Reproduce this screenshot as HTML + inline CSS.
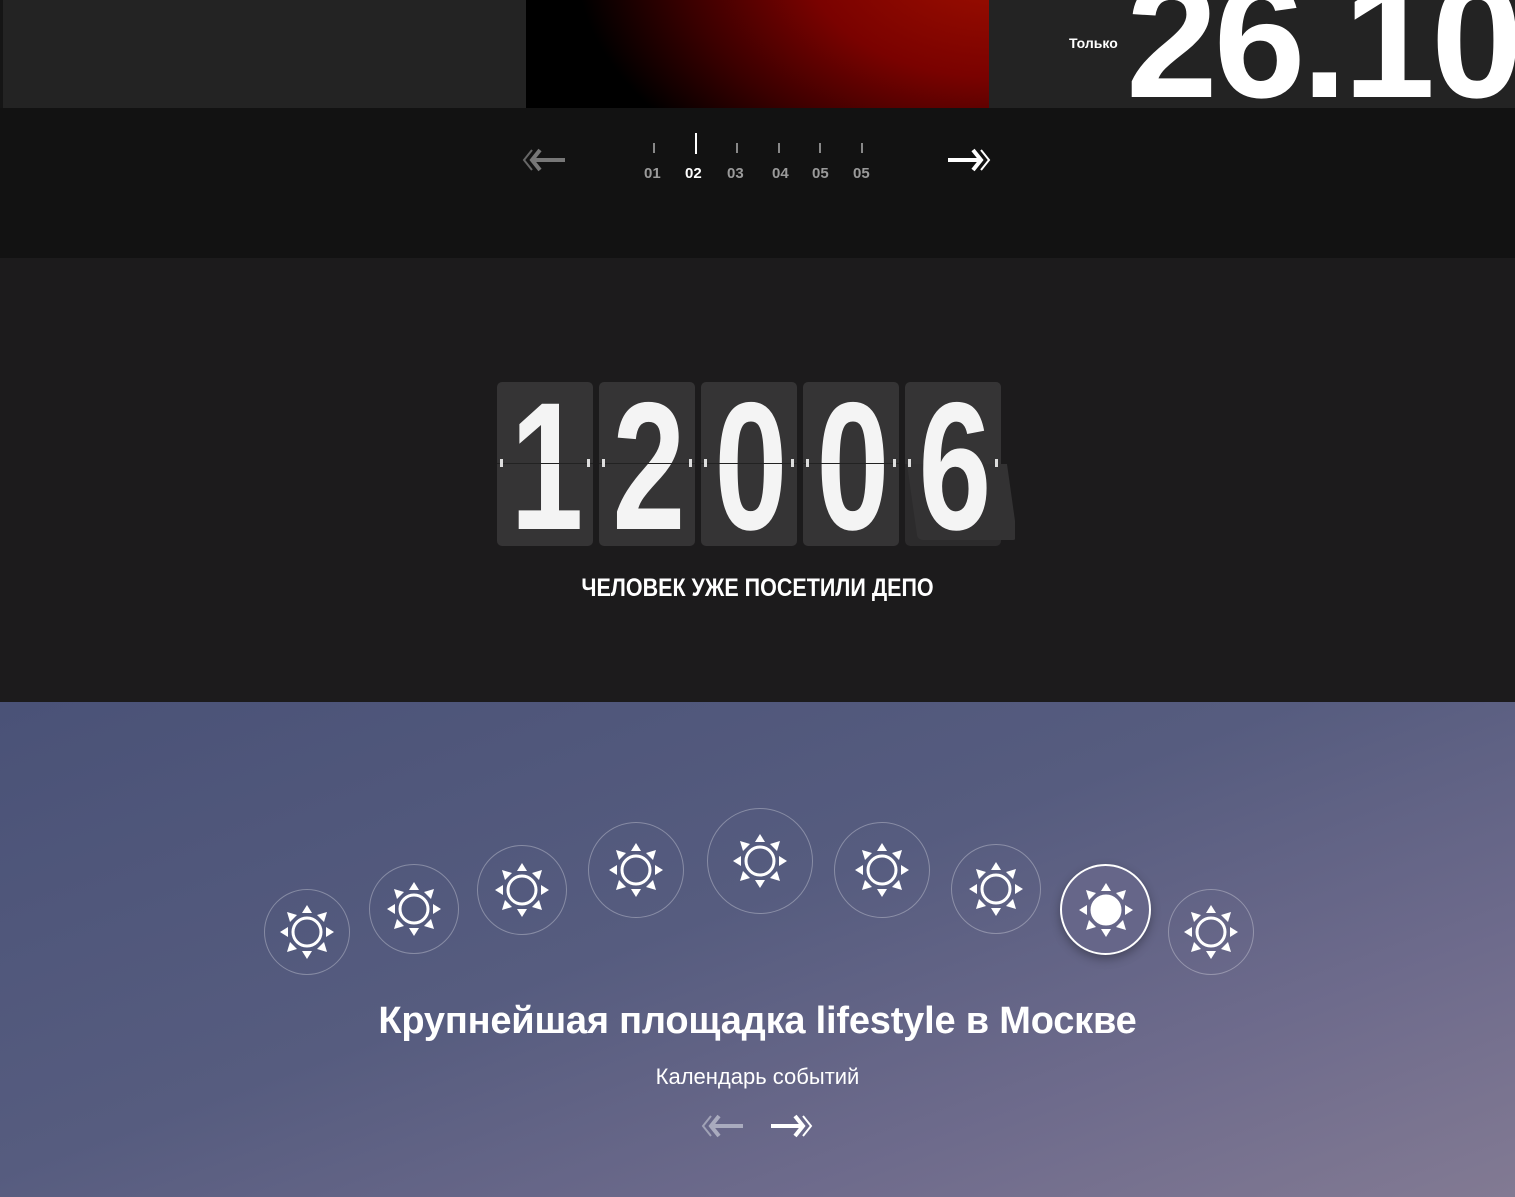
<!DOCTYPE html>
<html><head><meta charset="utf-8"><style>
*{margin:0;padding:0;box-sizing:border-box}
body{width:1515px;height:1197px;overflow:hidden;background:#121212;font-family:"Liberation Sans",sans-serif;position:relative}
.abs{position:absolute}
.top{left:0;top:0;width:1515px;height:108px;background:#232323;border-left:3px solid #151515}
.red{left:526px;top:0;width:463px;height:108px;background:radial-gradient(ellipse 420px 260px at 470px -40px,#a01000 0%,#7a0200 45%,#3a0000 75%,#000 100%)}
.date{left:1126px;top:-42px;font-size:165px;font-weight:bold;color:#fff;letter-spacing:-4px;line-height:165px;white-space:nowrap}
.tol{left:1069px;top:35px;font-size:14px;font-weight:bold;color:#fff}
.mid{left:0;top:258px;width:1515px;height:444px;background:#1c1b1c}
.card{top:382px;width:96px;height:164px;background:#353435;border-radius:5px;overflow:hidden}
.card span{position:absolute;left:0;width:96px;top:2px;text-align:center;font-weight:bold;font-size:182px;line-height:164px;color:#f4f4f4;transform:scaleX(.72)}
.card i{position:absolute;left:0;top:81px;width:100%;height:1px;background:#222}
.card b{position:absolute;top:77px;width:3px;height:8px;background:#ddd}
.bot{left:0;top:702px;width:1515px;height:495px;background:linear-gradient(160deg,#4a5277 0%,#565c7f 45%,#6e6b8c 75%,#827a93 100%)}
.c{position:absolute;border-radius:50%;border:1px solid rgba(255,255,255,.3)}
.c svg{position:absolute;left:50%;top:50%;transform:translate(-50%,-50%)}
.num{font-size:15px;font-weight:bold;color:#9a9a9a;top:165px}
.tick{top:143px;width:2px;height:10px;background:#888}
</style></head><body>
<div class="abs top"></div>
<div class="abs red"></div>
<div class="abs tol">Только</div>
<div class="abs date">26.10</div>

<svg class="abs" style="left:522px;top:148px" width="46" height="24" viewBox="0 0 46 24"><path d="M10 2L2 12L10 22" stroke="#666" stroke-width="2" fill="none"/><path d="M18 2L10 12L18 22" stroke="#777" stroke-width="4" fill="none"/><path d="M12 12H43" stroke="#777" stroke-width="4"/></svg>
<svg class="abs" style="left:946px;top:148px" width="46" height="24" viewBox="0 0 46 24"><path d="M2 12H33" stroke="#fff" stroke-width="4"/><path d="M27 2L35 12L27 22" stroke="#fff" stroke-width="4" fill="none"/><path d="M35 2L43 12L35 22" stroke="#fff" stroke-width="2" fill="none"/></svg>

<div class="abs tick" style="left:653px"></div><div class="abs num" style="left:644px">01</div>
<div class="abs tick" style="left:695px;top:133px;height:21px;background:#fff"></div><div class="abs num" style="left:685px;color:#fff">02</div>
<div class="abs tick" style="left:736px"></div><div class="abs num" style="left:727px">03</div>
<div class="abs tick" style="left:778px"></div><div class="abs num" style="left:772px">04</div>
<div class="abs tick" style="left:819px"></div><div class="abs num" style="left:812px">05</div>
<div class="abs tick" style="left:861px"></div><div class="abs num" style="left:853px">05</div>

<div class="abs mid"></div>
<div class="abs card" style="left:497px"><span>1</span><i></i><b style="left:3px"></b><b style="left:90px"></b></div>
<div class="abs card" style="left:599px"><span>2</span><i></i><b style="left:3px"></b><b style="left:90px"></b></div>
<div class="abs card" style="left:701px"><span>0</span><i></i><b style="left:3px"></b><b style="left:90px"></b></div>
<div class="abs card" style="left:803px"><span>0</span><i></i><b style="left:3px"></b><b style="left:90px"></b></div>
<div class="abs card" style="left:905px;width:110px;background:transparent"><div style="position:absolute;left:0;top:0;width:96px;height:164px;background:#2c2b2c;border-radius:5px"></div><div style="position:absolute;left:0;top:0;width:96px;height:82px;background:#353435;border-radius:5px 5px 0 0"></div><div style="position:absolute;left:2px;top:82px;width:100px;height:76px;background:#333233;transform:skewX(8deg);transform-origin:top left;border-radius:0 0 5px 5px"></div><span>6</span><b style="left:3px"></b><b style="left:90px"></b></div>
<div class="abs" style="left:0;top:574px;width:1515px;text-align:center;font-weight:bold;font-size:25px;color:#fff;transform:scaleX(.86)">ЧЕЛОВЕК УЖЕ ПОСЕТИЛИ ДЕПО</div>

<div class="abs bot"></div>
<svg width="0" height="0" style="position:absolute"><defs><g id="sun"><circle cx="0" cy="0" r="14" fill="none" stroke="#fff" stroke-width="3"/><g fill="#fff"><path d="M-5-19L5-19L0-27Z"/><path d="M-5 19L5 19L0 27Z"/><path d="M-19-5L-19 5L-27 0Z"/><path d="M19-5L19 5L27 0Z"/><path d="M10-17L17-10L20-20Z"/><path d="M-10-17L-17-10L-20-20Z"/><path d="M10 17L17 10L20 20Z"/><path d="M-10 17L-17 10L-20 20Z"/></g></g></defs></svg>
<div class="c" style="left:264px;top:889px;width:86px;height:86px"><svg width="56" height="56" viewBox="-28 -28 56 56"><use href="#sun"/></svg></div>
<div class="c" style="left:369px;top:864px;width:90px;height:90px"><svg width="56" height="56" viewBox="-28 -28 56 56"><use href="#sun"/></svg></div>
<div class="c" style="left:477px;top:845px;width:90px;height:90px"><svg width="56" height="56" viewBox="-28 -28 56 56"><use href="#sun"/></svg></div>
<div class="c" style="left:588px;top:822px;width:96px;height:96px"><svg width="56" height="56" viewBox="-28 -28 56 56"><use href="#sun"/></svg></div>
<div class="c" style="left:707px;top:808px;width:106px;height:106px"><svg width="56" height="56" viewBox="-28 -28 56 56"><use href="#sun"/></svg></div>
<div class="c" style="left:834px;top:822px;width:96px;height:96px"><svg width="56" height="56" viewBox="-28 -28 56 56"><use href="#sun"/></svg></div>
<div class="c" style="left:951px;top:844px;width:90px;height:90px"><svg width="56" height="56" viewBox="-28 -28 56 56"><use href="#sun"/></svg></div>
<div class="c" style="left:1060px;top:864px;width:91px;height:91px;border:2px solid #fff;background:#666689;box-shadow:0 4px 10px rgba(0,0,0,.3)"><svg width="56" height="56" viewBox="-28 -28 56 56"><use href="#sun"/><circle r="15" fill="#fff"/></svg></div>
<div class="c" style="left:1168px;top:889px;width:86px;height:86px"><svg width="56" height="56" viewBox="-28 -28 56 56"><use href="#sun"/></svg></div>

<div class="abs" style="left:0;top:1000px;width:1515px;text-align:center;font-weight:bold;font-size:38px;color:#fff;letter-spacing:-.2px">Крупнейшая площадка lifestyle в Москве</div>
<div class="abs" style="left:0;top:1064px;width:1515px;text-align:center;font-size:22px;color:#fff">Календарь событий</div>
<svg class="abs" style="left:701px;top:1114px" width="44" height="24" viewBox="0 0 44 24"><path d="M10 2L2 12L10 22" stroke="#a0a2b6" stroke-width="2" fill="none"/><path d="M18 2L10 12L18 22" stroke="#a9abbe" stroke-width="4" fill="none"/><path d="M12 12H42" stroke="#a9abbe" stroke-width="4"/></svg>
<svg class="abs" style="left:769px;top:1114px" width="44" height="24" viewBox="0 0 44 24"><path d="M2 12H32" stroke="#fff" stroke-width="4"/><path d="M26 2L34 12L26 22" stroke="#fff" stroke-width="4" fill="none"/><path d="M34 2L42 12L34 22" stroke="#fff" stroke-width="2" fill="none"/></svg>
</body></html>
